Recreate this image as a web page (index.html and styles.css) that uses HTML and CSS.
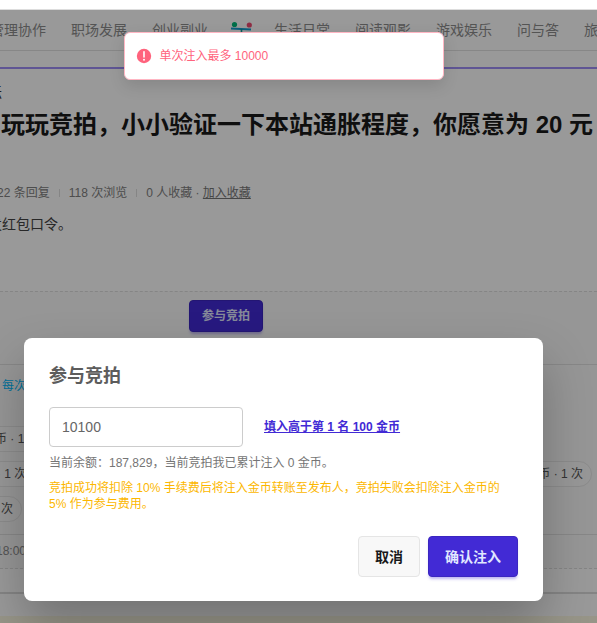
FILE: index.html
```html
<!DOCTYPE html>
<html lang="zh-CN">
<head>
<meta charset="utf-8">
<title>参与竞拍</title>
<link rel="stylesheet" href="styles.css">
</head>
<body>
<div class="stage">
  <div class="page">
    <nav class="nav">
      <a href="#">管理协作</a>
      <a href="#">职场发展</a>
      <a href="#">创业副业</a>
      <a href="#" class="nav-icon" aria-label="活动">
        <svg viewBox="0 0 22 18" width="22" height="18" aria-hidden="true">
          <circle cx="4.5" cy="3.5" r="2.6" fill="#00b87a"/>
          <circle cx="19.3" cy="4" r="2.6" fill="#ee4a70"/>
          <path d="M1 7.4L21 8.6" stroke="#159fd0" stroke-width="2"/>
          <path d="M11.5 8V17" stroke="#0b9a9a" stroke-width="1.6"/>
        </svg>
      </a>
      <a href="#">生活日常</a>
      <a href="#">阅读观影</a>
      <a href="#">游戏娱乐</a>
      <a href="#">问与答</a>
      <a href="#">旅</a>
    </nav>
    <main class="post">
      <p class="crumb">坛</p>
      <h1>玩玩竞拍，小小验证一下本站通胀程度，你愿意为 20 元</h1>
      <div class="meta">
        <span>22 条回复</span><i></i><span>118 次浏览</span><i></i><span>0 人收藏 · <a href="#">加入收藏</a></span>
      </div>
      <p class="body">发红包口令。</p>
      <section class="auction">
        <div class="auction-head"><button type="button" class="btn btn-small">参与竞拍</button></div>
        <div class="bids">
          <p class="rule">每次</p>
          <ul>
            <li class="row"><span class="pill wide">币 · 1 次</span></li>
            <li class="row"><span class="pill mid">· 1 次</span><span class="pill">金币 · 1 次</span></li>
            <li class="row"><span class="pill last">1 次</span></li>
          </ul>
        </div>
        <div class="time">18:00</div>
      </section>
    </main>
    <div class="notice"></div>
  </div>

  <div class="overlay">
    <div class="toast" role="alert">
      <svg viewBox="0 0 16 16" width="16" height="16" aria-hidden="true">
        <circle cx="8" cy="8" r="7.2" fill="#ff637d"/>
        <path d="M8 3.8V9" stroke="#fff" stroke-width="1.6" stroke-linecap="round"/>
        <circle cx="8" cy="11.8" r="1" fill="#fff"/>
      </svg>
      <span>单次注入最多 10000</span>
    </div>
    <form class="modal" role="dialog" aria-labelledby="dialog-title">
      <h2 id="dialog-title">参与竞拍</h2>
      <div class="field">
        <input type="text" value="10100" aria-label="注入金币">
        <a href="#">填入高于第 1 名 100 金币</a>
      </div>
      <p class="balance">当前余额：187,829，当前竞拍我已累计注入 0 金币。</p>
      <p class="warning">竞拍成功将扣除 10% 手续费后将注入金币转账至发布人，竞拍失败会扣除注入金币的 5% 作为参与费用。</p>
      <div class="actions">
        <button type="button" class="btn btn-plain">取消</button>
        <button type="button" class="btn">确认注入</button>
      </div>
    </form>
  </div>
</div>
</body>
</html>
```

FILE: styles.css
```css
* { box-sizing: border-box; }
body {
  margin: 0;
  padding-top: 9px;
  background: #fff;
  font: 12px/16px "Liberation Sans", "Noto Sans CJK SC", sans-serif;
}
h1, h2, p, ul { margin: 0; padding: 0; }

.stage {
  position: relative;
  min-height: calc(100vh - 9px);
  overflow: hidden;
  border-top: 1px solid #ddd;
}
.page { white-space: nowrap; }

.nav {
  display: flex;
  align-items: center;
  gap: 25px;
  height: 41px;
  margin-left: -10px;
  border-bottom: 1px solid #e2e2e2;
  font-size: 14px;
}
.nav a { flex: none; color: #8c8c8c; text-decoration: none; }
.nav-icon { display: flex; margin: 0 -3px; }

.post { margin-top: 16px; border-top: 2px solid #9e8ef7; border-bottom: 2px solid #dcdcdc; }
.crumb { margin: 15px 0 0 -12px; font-size: 14px; color: #333; }
h1 { margin: 7px 0 0 1px; font-size: 24px; line-height: 36px; color: #191919; }
.meta {
  display: flex;
  align-items: center;
  gap: 9px;
  margin: 42px 0 0 -3px;
  color: #808080;
}
.meta i { width: 1px; height: 8px; background: #dedede; }
.meta a { color: #777; }
.body { margin: 13px 0 0 -12px; font-size: 14px; line-height: 20px; color: #444; }

.auction {
  margin: 57px 0 23px;
  border-top: 1px dashed #dedede;
  border-bottom: 1px dashed #dedede;
  background: #fafafa;
}
.auction-head { padding: 8px 0 32px 189px; border-bottom: 1px solid #e2e2e2; }
.bids { padding: 13px 5px 12px 0; border-bottom: 1px solid #e2e2e2; }
.rule { margin-left: 2px; color: #00bafe; }
.bids ul { margin-top: 32px; list-style: none; display: grid; gap: 9px; }
.row { display: flex; justify-content: space-between; }
.pill {
  height: 26px;
  padding: 0 8px;
  border: 1px solid #e8e8e8;
  border-radius: 13px;
  background: #fcfcfc;
  line-height: 24px;
  color: #555;
}
.wide { margin-left: -14px; width: 80px; }
.mid { margin-left: -12px; width: 80px; }
.last { margin-left: -18px; }
.time { margin-left: -4px; line-height: 33px; color: #8c8c8c; }
.notice { height: 7px; margin-top: 22px; background: #fcf8e3; }

.overlay {
  position: absolute;
  inset: 0;
  display: flex;
  flex-direction: column;
  justify-content: space-between;
  padding: 22px 54px 22px 24px;
  background: rgba(0, 0, 0, .4);
}
.toast {
  align-self: center;
  display: flex;
  align-items: center;
  gap: 8px;
  width: 320px;
  max-width: 100%;
  height: 48px;
  padding: 0 11px;
  border: 1px solid #ffb6c3;
  border-radius: 6px;
  background: #fff;
  box-shadow: 0 6px 16px rgba(0, 0, 0, .12);
  color: #ff637d;
}
.modal {
  padding: 24px 25px;
  border-radius: 8px;
  background: #fff;
  box-shadow: 0 24px 48px rgba(0, 0, 0, .25);
}
h2 { font-size: 18px; line-height: 28px; color: #5c5c5c; }
.field { display: flex; align-items: center; gap: 21px; margin-top: 17px; }
.field input {
  width: 194px;
  height: 40px;
  padding: 0 12px;
  border: 1px solid #ccc;
  border-radius: 4px;
  background: #fff;
  font: inherit;
  font-size: 14px;
  color: #666;
}
.field a { font-weight: 700; color: #422ad5; }
.balance { margin-top: 8px; color: #757575; }
.warning { margin-top: 9px; color: #fcb700; }
.actions { display: flex; justify-content: flex-end; gap: 8px; margin-top: 24px; }

.btn {
  height: 41px;
  padding: 0 16px;
  border: 1px solid #3b26c0;
  border-radius: 4px;
  background: #422ad5;
  box-shadow: 0 3px 3px -1px rgba(66, 42, 213, .35);
  font: inherit;
  font-size: 14px;
  font-weight: 700;
  color: #e0e7ff;
}
.btn-small { display: block; height: 32px; padding: 0 12px; font-size: 12px; }
.btn-plain { border-color: #e5e5e5; background: #f8f8f8; box-shadow: none; color: #18181b; }
```
